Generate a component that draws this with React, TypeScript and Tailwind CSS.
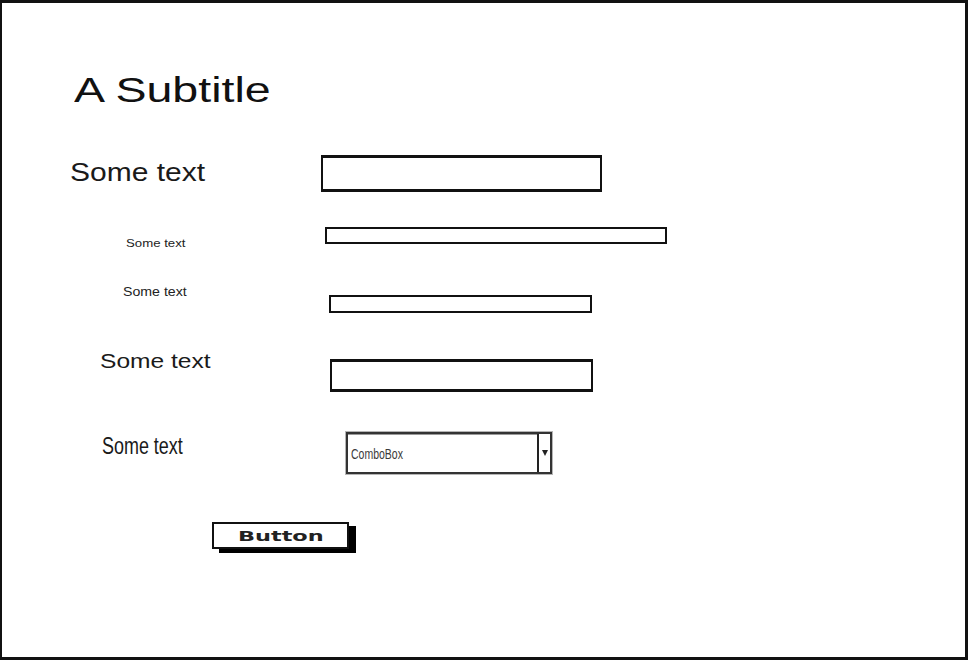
import React from "react";

const dejavu = { fontFamily: '"DejaVu Sans", sans-serif' };
const liberation = { fontFamily: '"Liberation Sans", Arial, sans-serif' };

function Label({
  pad,
  width,
  children,
}: {
  pad: string;
  width: string;
  children: React.ReactNode;
}) {
  return <div className={`shrink-0 ${pad} ${width}`}>{children}</div>;
}

export default function App() {
  return (
    <div className="w-[968px] h-[660px] bg-white border-[#111] border-t-[3px] border-l-2 border-r-[3px] border-b-[3px] overflow-hidden">
      <div className="flex flex-col pt-[69px] text-[#111]">
        {/* subtitle */}
        <h2
          style={liberation}
          className="ml-[72px] h-[35px] text-[35px] leading-[35px] font-normal origin-left scale-x-[1.33] whitespace-nowrap"
        >
          A Subtitle
        </h2>

        {/* row 1 */}
        <div className="flex items-start h-[37px] mt-[48px]">
          <Label pad="pl-[68px]" width="w-[319px]">
            <div
              style={liberation}
              className="mt-[5px] text-[25px] leading-[25px] origin-left scale-x-[1.2] whitespace-nowrap text-[#1a1a1a]"
            >
              Some text
            </div>
          </Label>
          <div className="w-[281px] h-[37px] border-x-2 border-y-[3px] border-[#111]" />
        </div>

        {/* row 2 */}
        <div className="flex items-start h-[17px] mt-[35px]">
          <Label pad="pl-[124px]" width="w-[323px]">
            <div
              style={liberation}
              className="mt-[11px] text-[11px] leading-[11px] origin-left scale-x-[1.2] whitespace-nowrap text-[#222]"
            >
              Some text
            </div>
          </Label>
          <div className="w-[342px] h-[17px] border-2 border-[#111]" />
        </div>

        {/* row 3 */}
        <div className="flex items-start h-[27px] mt-[42px]">
          <Label pad="pl-[121px]" width="w-[327px]">
            <div
              style={liberation}
              className="text-[12px] leading-[12px] origin-left scale-x-[1.18] whitespace-nowrap text-[#222]"
            >
              Some text
            </div>
          </Label>
          <div className="mt-[9px] w-[263px] h-[18px] border-2 border-[#111]" />
        </div>

        {/* row 4 */}
        <div className="flex items-start h-[42px] mt-[37px]">
          <Label pad="pl-[98px]" width="w-[328px]">
            <div
              style={liberation}
              className="text-[21px] leading-[21px] origin-left scale-x-[1.17] whitespace-nowrap text-[#1a1a1a]"
            >
              Some text
            </div>
          </Label>
          <div className="mt-[9px] w-[263px] h-[33px] border-x-2 border-y-[3px] border-[#111]" />
        </div>

        {/* row 5 */}
        <div className="flex items-start h-[42px] mt-[40px]">
          <Label pad="pl-[100px]" width="w-[344px]">
            <div
              style={liberation}
              className="mt-[3px] text-[23px] leading-[23px] origin-left scale-x-[0.78] whitespace-nowrap text-[#1a1a1a]"
            >
              Some text
            </div>
          </Label>
          <div className="flex w-[206px] h-[42px] border-2 border-[#333] shadow-[0_0_0_1px_#b5b5b5] bg-white">
            <div className="flex-1 flex items-center pl-[3px] border-t border-[#999]">
              <span
                style={liberation}
                className="text-[15px] leading-[15px] origin-left scale-x-[0.7] inline-block text-[#3a3a3a] whitespace-nowrap"
              >
                ComboBox
              </span>
            </div>
            <div className="w-[13px] border-l-2 border-[#222] flex items-center justify-center">
              <div className="w-0 h-0 border-l-[3px] border-r-[3px] border-t-[6px] border-l-transparent border-r-transparent border-t-[#222]" />
            </div>
          </div>
        </div>

        {/* row 6 */}
        <div className="flex mt-[48px] pl-[210px]">
          <button
            type="button"
            className="w-[137px] h-[27px] border-2 border-[#111] bg-white shadow-[7px_4px_0_#000] flex items-center justify-center"
          >
            <span
              style={dejavu}
              className="text-[14px] leading-[14px] font-bold scale-x-[1.6] inline-block text-[#222]"
            >
              Button
            </span>
          </button>
        </div>
      </div>
    </div>
  );
}
